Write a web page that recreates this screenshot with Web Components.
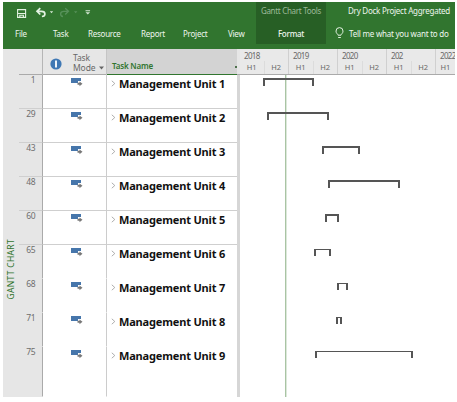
<!DOCTYPE html>
<html lang="en">
  <head>
    <meta charset="UTF-8" />
    <meta name="viewport" content="width=device-width, initial-scale=1.0" />
    <title>Dry Dock Project Aggregated</title>
    <style>
      body {
        margin: 0;
        padding: 2px 2px 5px 3px;
        box-sizing: border-box;
        width: 457px;
        height: 402px;
        overflow: hidden;
        background: #fff;
        font-family: "Noto Sans", sans-serif;
      }
    </style>
  </head>
  <body>
    <project-window></project-window>

    <template id="window-tmpl">
      <style>
        :host { display: flex; flex-direction: column; height: 395px; overflow: hidden; }
        .main { display: flex; flex: 1; min-height: 0; }
        .side {
          width: 16px;
          background: #e6e6e6;
          color: #31752f;
          box-sizing: border-box;
          padding: 190px 0 0 1px;
        }
        .side span {
          display: block;
          writing-mode: vertical-rl;
          transform: rotate(180deg);
          font-size: 8.5px;
          line-height: 13px;
          letter-spacing: 0.32px;
          white-space: nowrap;
        }
      </style>
      <app-ribbon></app-ribbon>
      <div class="main">
        <div class="side"><span>GANTT CHART</span></div>
        <task-table></task-table>
        <gantt-chart></gantt-chart>
      </div>
    </template>

    <template id="ribbon-tmpl">
      <style>
        :host {
          display: grid;
          grid-template-columns: 253px 70px 1fr;
          height: 47px;
          background: #31752f;
          color: #eef6ee;
          font-size: 8px;
          letter-spacing: -0.25px;
          line-height: 12px;
          white-space: nowrap;
        }
        .left, .right { display: flex; flex-direction: column; }
        .quick { height: 20px; }
        .quick svg { display: block; }
        .tabs { display: flex; padding-top: 6px; }
        ribbon-tab:nth-child(1) { width: 38px; margin-left: 12px; }
        ribbon-tab:nth-child(2) { width: 35px; }
        ribbon-tab:nth-child(3) { width: 53px; }
        ribbon-tab:nth-child(4) { width: 42px; }
        ribbon-tab:nth-child(5) { width: 45px; }
        .context { background: #275f25; height: 42px; text-align: center; }
        .context .tool { color: #9dbb9a; padding-top: 3px; height: 17px; letter-spacing: -0.3px; }
        .context .tab { padding-top: 6px; font-weight: 500; }
        .title { padding: 3px 0 0 22px; height: 17px; letter-spacing: -0.25px; }
        .tell { display: flex; padding: 5px 0 0 9px; }
        .tell span { padding: 1px 0 0 5px; letter-spacing: -0.22px; }
      </style>
      <div class="left">
        <div class="quick">
          <svg width="100" height="20" viewBox="3 2 100 20" fill="none">
            <path d="M17.6 9.6h8v7.8h-8zM18 13.5h7.5M19.8 17.5v-2.2h3.6v2.2" stroke="#e3f2e2" stroke-width="1.1" />
            <path d="M37 11.3h4.5c2.5 0 3.4 1.4 3.4 2.6 0 1.6-1.2 2.4-3 2.6M40.3 8.2 37 11.3l3.3 3.2" stroke="#e3f2e2" stroke-width="1.7" />
            <path d="M49.8 11.2h3.4l-1.7 2zM85.5 12.2h4.6l-2.3 2.4zM85.5 10.3h4.6v1h-4.6z" fill="#d5e8d4" />
            <path d="M68.5 11.3H64c-2.5 0-3.4 1.4-3.4 2.6 0 1.6 1 2.4 2.4 2.6M65.2 8.2l3.3 3.1-3.3 3.2" stroke="#57915a" stroke-width="1.3" />
            <path d="M74 11.2h3.4l-1.7 2z" fill="#57915a" />
          </svg>
        </div>
        <div class="tabs">
          <ribbon-tab>File</ribbon-tab>
          <ribbon-tab>Task</ribbon-tab>
          <ribbon-tab>Resource</ribbon-tab>
          <ribbon-tab>Report</ribbon-tab>
          <ribbon-tab>Project</ribbon-tab>
          <ribbon-tab>View</ribbon-tab>
        </div>
      </div>
      <div class="context">
        <div class="tool">Gantt Chart Tools</div>
        <div class="tab">Format</div>
      </div>
      <div class="right">
        <div class="title">Dry Dock Project Aggregated</div>
        <div class="tell">
          <svg width="9" height="13" viewBox="0 0 9 13" fill="none" stroke="#e3f2e2">
            <path d="M3 8.2C3 7 1 6.5 1 4.1a3.5 3.5 0 0 1 7 0C8 6.5 6 7 6 8.2zM3.2 10.5h2.6" />
          </svg>
          <span>Tell me what you want to do</span>
        </div>
      </div>
    </template>

    <template id="table-tmpl">
      <style>
        :host { display: block; width: 221px; background: #fff; }
        .head {
          display: grid;
          grid-template-columns: 23px 65px 1fr 3px;
          height: 26px;
          box-sizing: border-box;
          color: #686868;
          background: #e6e6e6;
          border-bottom: 1px solid #aaa;
          font-size: 8.5px;
          line-height: 10px;
        }
        .mode { display: flex; border-left: 1px solid #b5b5b5; border-right: 1px solid #c5c5c5; }
        .info { margin: 9px 0 0 7px; width: 12px; height: 12px; }
        .label { margin: 4px 0 0 11px; width: 25px; letter-spacing: -0.1px; }
        .arrow { margin: 17px 0 0 1px; width: 5px; height: 4px; }
        .name {
          display: flex;
          justify-content: space-between;
          box-sizing: border-box;
          height: 26px;
          padding: 12px 0 0 5px;
          background: #d3d3d3;
          color: #31752f;
          border-bottom: 1px solid #31752f;
          font-size: 8px;
          font-weight: 600;
          letter-spacing: -0.2px;
        }
        .name i { width: 2px; height: 2px; margin-top: 5px; background: #4d704c; }
      </style>
      <div class="head">
        <div></div>
        <div class="mode">
          <svg class="info" viewBox="0 0 12 12">
            <circle cx="6" cy="6" r="5.6" fill="#3f78b4" />
            <path d="M5 2.5h2v7H5z" fill="#eef4fa" />
          </svg>
          <div class="label">Task Mode</div>
          <svg class="arrow" viewBox="0 0 5 4"><path d="M0 .5h5L2.5 3.5z" fill="#666" /></svg>
        </div>
        <div class="name">Task Name<i></i></div>
        <div></div>
      </div>
      <div class="rows"></div>
    </template>

    <template id="row-tmpl">
      <style>
        :host { display: grid; grid-template-columns: 23px 65px 130px 3px; height: 34px; }
        div { box-sizing: border-box; border-bottom: 1px solid transparent; }
        :host([lined]) div { border-bottom-color: #cfcfcf; }
        .id {
          background: #e6e6e6;
          color: #6e6e6e;
          font-size: 8.5px;
          line-height: 10px;
          letter-spacing: -0.5px;
          text-align: right;
          padding: 0 7px 0 0;
        }
        .mode { border-left: 1px solid #aaa; border-right: 1px solid #ccc; padding: 3px 0 0 28px; }
        .mode svg, .name svg { display: block; }
        .name {
          display: flex;
          color: #111;
          font-size: 11px;
          font-weight: 700;
          line-height: 16px;
          letter-spacing: -0.17px;
          white-space: nowrap;
          padding: 1px 0 0 4px;
        }
        .name svg { margin: 4px 3px 0 0; }
        .split { background: #d6d6d6; border: 0 !important; }
      </style>
      <div class="id"><slot name="id"></slot></div>
      <div class="mode">
        <svg width="12" height="9" viewBox="0 0 12 9">
          <path d="M0 0h10v3H7v2H0z" fill="#4676ab" />
          <path d="M6.5 4.7h2V3.4l3 2.4-3 2.4V6.7h-2z" fill="#777" />
        </svg>
      </div>
      <div class="name">
        <svg width="5" height="7" viewBox="0 0 5 7" fill="none" stroke="#999" stroke-width=".8"><path d="M.8.8 3.8 3.5.8 6.2" /></svg>
        <slot></slot>
      </div>
      <div class="split"></div>
    </template>

    <template id="chart-tmpl">
      <style>
        :host { display: block; flex: 1; min-width: 0; overflow: hidden; background: #fff; }
        .scale {
          display: flex;
          height: 26px;
          box-sizing: border-box;
          background: #e9e9e9;
          border-bottom: 1px solid #aaa;
          color: #686868;
          font-size: 8px;
          line-height: 12px;
        }
        .canvas { position: relative; height: 322px; }
        .today { position: absolute; left: 45px; top: 0; width: 1px; height: 100%; background: #a9c4a4; border-right: 1px solid #dce8da; }
        .bar {
          position: absolute;
          height: 8px;
          box-sizing: border-box;
          border: 1.5px solid #555;
          border-width: 2px 2px 0;
        }
        .bar.thin { border-top-width: 1px; height: 7px; }
      </style>
      <div class="scale">
        <year-scale>2018</year-scale>
        <year-scale>2019</year-scale>
        <year-scale>2020</year-scale>
        <year-scale>202</year-scale>
        <year-scale>2022</year-scale>
      </div>
      <div class="canvas"><div class="today"></div></div>
    </template>

    <script>
      const tasks = [
        { id: 1, from: 263, to: 314 },
        { id: 29, from: 267, to: 329 },
        { id: 43, from: 322, to: 360 },
        { id: 48, from: 328, to: 400 },
        { id: 60, from: 325, to: 339 },
        { id: 65, from: 314, to: 331 },
        { id: 68, from: 337, to: 348 },
        { id: 71, from: 336, to: 342 },
        { id: 75, from: 315, to: 413 },
      ];

      class BaseElement extends HTMLElement {
        render(id) {
          this.attachShadow({ mode: "open" });
          this.shadowRoot.append(document.getElementById(id).content.cloneNode(true));
        }
      }

      customElements.define("ribbon-tab", class extends HTMLElement {
        connectedCallback() {
          this.attachShadow({ mode: "open" }).innerHTML =
            "<style>:host { display: block; flex: none; }</style><slot></slot>";
        }
      });

      customElements.define("app-ribbon", class extends BaseElement {
        connectedCallback() {
          this.render("ribbon-tmpl");
        }
      });

      customElements.define("task-row", class extends BaseElement {
        connectedCallback() {
          this.render("row-tmpl");
        }
      });

      customElements.define("task-table", class extends BaseElement {
        connectedCallback() {
          this.render("table-tmpl");
          const rows = this.shadowRoot.querySelector(".rows");
          tasks.forEach((task, i) => {
            const row = document.createElement("task-row");
            row.innerHTML = `<span slot="id">${task.id}</span><span>Management Unit ${i + 1}</span>`;
            // only the upper rows have a rule below them
            row.toggleAttribute("lined", i < 5);
            if (i === tasks.length - 1) row.style.height = "50px";
            rows.append(row);
          });
        }
      });

      customElements.define("year-scale", class extends HTMLElement {
        connectedCallback() {
          const last = this.textContent === "2022";
          this.attachShadow({ mode: "open" }).innerHTML = `
            <style>
              :host { display: block; flex: none; width: ${last ? 19 : 49}px; box-sizing: border-box; border-right: ${last ? 0 : 1}px solid #d0d0d0; }
              .year { padding: 1px 0 0 4px; height: 11px; letter-spacing: -0.65px; }
              .half { display: flex; height: 13px; }
              .half span { width: 24px; text-align: center; font-size: 7.5px; }
              .half span + span { border-left: 1px solid #dcdcdc; }
            </style>
            <div class="year"><slot></slot></div>
            <div class="half"><span>H1</span>${last ? "" : "<span>H2</span>"}</div>`;
        }
      });

      customElements.define("gantt-chart", class extends BaseElement {
        connectedCallback() {
          this.render("chart-tmpl");
          const canvas = this.shadowRoot.querySelector(".canvas");
          tasks.forEach((task, i) => {
            const bar = document.createElement("div");
            bar.className = i > 4 ? "bar thin" : "bar";
            bar.style.left = task.from - 240 + "px";
            bar.style.top = 3 + i * 34 + (i > 4 ? 1 : 0) + "px";
            bar.style.width = task.to - task.from + "px";
            canvas.append(bar);
          });
        }
      });

      customElements.define("project-window", class extends BaseElement {
        connectedCallback() {
          this.render("window-tmpl");
        }
      });
    </script>
  </body>
</html>
